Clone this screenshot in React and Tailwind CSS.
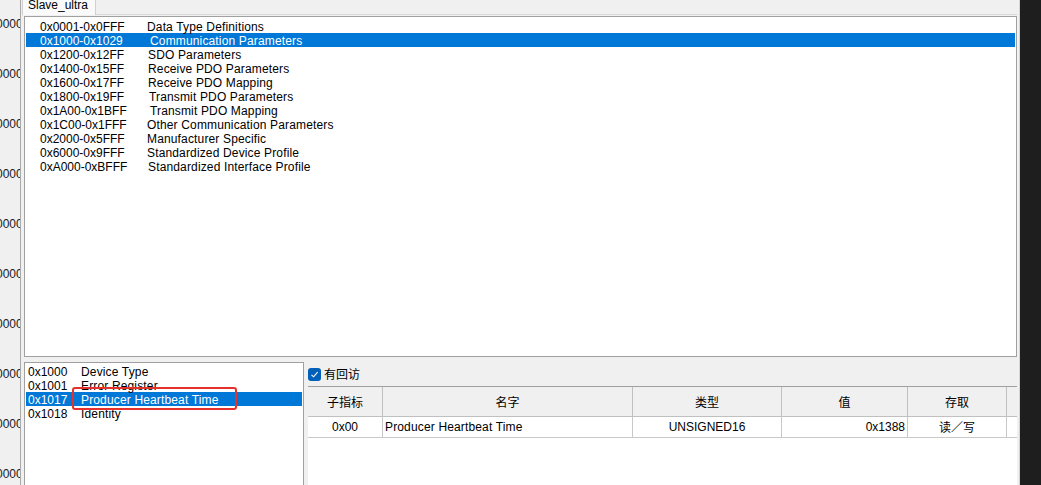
const ranges = [
  ['0x0001-0x0FFF', 'Data Type Definitions', 'ml-0'],
  ['0x1000-0x1029', 'Communication Parameters', 'ml-[3px]'],
  ['0x1200-0x12FF', 'SDO Parameters', 'ml-[1px]'],
  ['0x1400-0x15FF', 'Receive PDO Parameters', 'ml-[1px]'],
  ['0x1600-0x17FF', 'Receive PDO Mapping', 'ml-[1px]'],
  ['0x1800-0x19FF', 'Transmit PDO Parameters', 'ml-[2px]'],
  ['0x1A00-0x1BFF', 'Transmit PDO Mapping', 'ml-[3px]'],
  ['0x1C00-0x1FFF', 'Other Communication Parameters', 'ml-0'],
  ['0x2000-0x5FFF', 'Manufacturer Specific', 'ml-0'],
  ['0x6000-0x9FFF', 'Standardized Device Profile', 'ml-0'],
  ['0xA000-0xBFFF', 'Standardized Interface Profile', 'ml-[1px]'],
];

const objects = [
  ['0x1000', 'Device Type'],
  ['0x1001', 'Error Register'],
  ['0x1017', 'Producer Heartbeat Time'],
  ['0x1018', 'Identity'],
];

const cjk = "font-['Noto_Sans_CJK_SC',sans-serif]";

function RangeList() {
  return (
    <div className="h-[341px] shrink-0 border border-[#a0a0a0] bg-white pt-[2px]">
      {ranges.map(([range, name, offset], i) => (
        <div
          key={range}
          className={`mx-[1px] flex h-[14px] items-center whitespace-nowrap pl-[14px] leading-[14px] ${
            i === 1 ? 'bg-[#0078d7] text-white' : 'text-black'
          }`}
        >
          <span className="inline-block w-[107px] pt-[1px]">{range}</span>
          <span className={`${offset} pt-[1px] tracking-[0.15px]`}>{name}</span>
        </div>
      ))}
    </div>
  );
}

function ObjectList() {
  return (
    <div className="relative h-[130px] w-[280px] shrink-0 border border-[#a0a0a0] bg-white pt-[1px]">
      {objects.map(([index, name], i) => (
        <div
          key={index}
          className={`mx-[1px] flex h-[14px] items-center whitespace-nowrap pl-[2px] leading-[14px] ${
            i === 2 ? 'bg-[#0078d7] text-white' : 'text-black'
          }`}
        >
          <span className="inline-block w-[53px] pt-[1px]">{index}</span>
          <span className="pt-[1px] tracking-[0.15px]">{name}</span>
        </div>
      ))}
      <div className="absolute left-[47px] top-[24px] h-[23px] w-[165px] rounded-[3px] border-2 border-[#e5302b]" />
    </div>
  );
}

function EntryTable() {
  const cols = 'grid grid-cols-[75px_250px_149px_126px_99px_9px]';

  return (
    <div className="flex-1 bg-white">
      <div className={`${cols} h-[31px] border-t border-b border-t-[#a0a0a0] border-b-[#c0c0c0] bg-[#f0f0f0] ${cjk}`}>
        <div className="flex items-center justify-center border-r border-[#c0c0c0]">子指标</div>
        <div className="flex items-center justify-center border-r border-[#c0c0c0]">名字</div>
        <div className="flex items-center justify-center border-r border-[#c0c0c0]">类型</div>
        <div className="flex items-center justify-center border-r border-[#c0c0c0]">值</div>
        <div className="flex items-center justify-center border-r border-[#c0c0c0]">存取</div>
        <div />
      </div>
      <div className={`${cols} h-[21px] border-b border-[#c8c8c8] text-black`}>
        <div className="flex items-center justify-center border-r border-[#c8c8c8]">0x00</div>
        <div className="flex items-center border-r border-[#c8c8c8] pl-[2px] tracking-[0.15px]">Producer Heartbeat Time</div>
        <div className="flex items-center justify-center border-r border-[#c8c8c8]">UNSIGNED16</div>
        <div className="flex items-center justify-end border-r border-[#c8c8c8] pr-[2px]">0x1388</div>
        <div className={`flex items-center justify-center border-r border-[#c8c8c8] ${cjk}`}>读／写</div>
        <div />
      </div>
    </div>
  );
}

export default function App() {
  return (
    <div className="flex h-[485px] w-[1041px] overflow-hidden bg-[#f0f0f0] font-['Liberation_Sans',sans-serif] text-[12px] text-black">
      <div className="w-[21px] shrink-0 overflow-hidden border-r border-[#a9a9a9] pt-[17px] text-[#202020]">
        {Array.from({ length: 10 }).map((_, i) => (
          <div key={i} className="ml-[-4px] h-[50px] whitespace-nowrap leading-[14px]">
            00000
          </div>
        ))}
      </div>

      <div className="flex w-[999px] shrink-0 flex-col overflow-hidden border-r border-[#d4d4d4] pl-[3px] pr-[2px]">
        <div className="flex h-[16px] shrink-0">
          <div className="-ml-[2px] h-[15px] w-[74px] border-x border-[#d0d0d0] bg-[#fafafa] pl-[5px] leading-[11px]">
            Slave_ultra
          </div>
          <div className="h-[15px] flex-1 border-b border-[#d9d9d9]" />
        </div>

        <RangeList />

        <div className="mt-[5px] flex shrink-0">
          <ObjectList />
          <div className="flex flex-1 flex-col pl-[4px]">
            <div className="flex h-[24px] items-center gap-[3px]">
              <span className="flex h-[13px] w-[13px] items-center justify-center rounded-[3px] bg-[#005fb8]">
                <svg width="9" height="9" viewBox="0 0 9 9" fill="none">
                  <path d="M1.5 4.8 L3.6 6.8 L7.6 2.2" stroke="white" strokeWidth="1.1" />
                </svg>
              </span>
              <span className={cjk}>有回访</span>
            </div>
            <EntryTable />
          </div>
        </div>
      </div>

      <div className="flex-1 bg-[#1e1e1e]" />
    </div>
  );
}
